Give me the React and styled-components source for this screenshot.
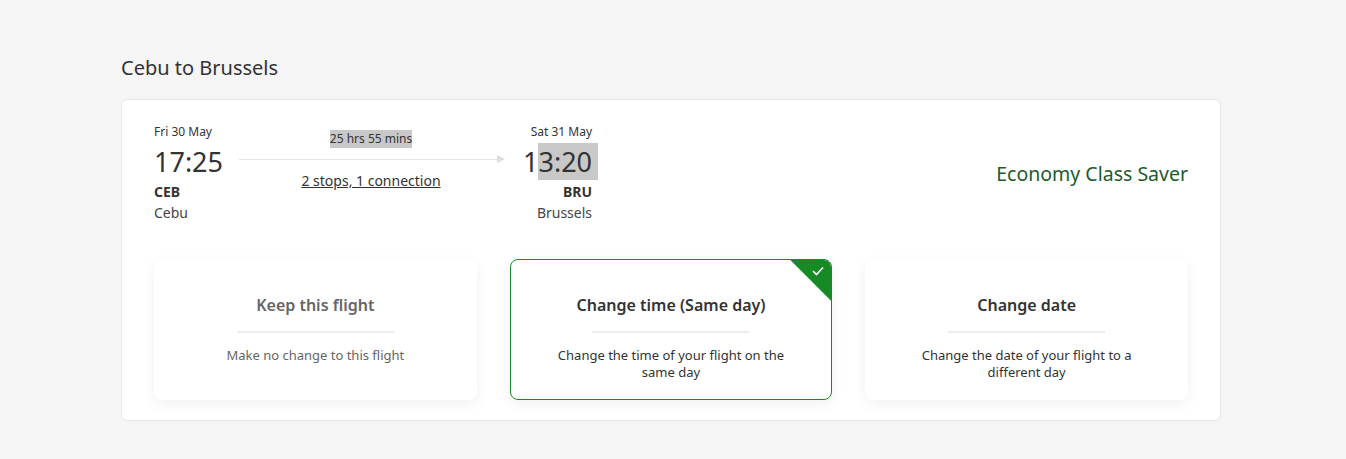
import React from 'react';
import styled, { createGlobalStyle } from 'styled-components';

const GlobalStyle = createGlobalStyle`
    html, body {
        margin: 0;
        padding: 0;
        background: #f5f5f5;
        font-family: "Noto Sans", "Open Sans", sans-serif;
        color: #333;
    }
`;

const options = [
    { id: 'keep', title: 'Keep this flight', text: 'Make no change to this flight', muted: true },
    { id: 'time', title: 'Change time (Same day)', text: 'Change the time of your flight on the same day', selected: true },
    { id: 'date', title: 'Change date', text: 'Change the date of your flight to a different day' },
];

const App = () => {
    return (
        <Page>
            <GlobalStyle />
            <Heading>Cebu to Brussels</Heading>
            <Card>
                <FlightRow>
                    <Endpoint>
                        <DateText>Fri 30 May</DateText>
                        <Time>17:25</Time>
                        <Code>CEB</Code>
                        <City>Cebu</City>
                    </Endpoint>
                    <Route>
                        <Duration>25 hrs 55 mins</Duration>
                        <Line>
                            <svg width="8" height="8" viewBox="0 0 8 8">
                                <path d="M0 0 L8 4 L0 8 Z" fill="#ddd" />
                            </svg>
                        </Line>
                        <Stops>2 stops, 1 connection</Stops>
                    </Route>
                    <Endpoint $right>
                        <DateText>Sat 31 May</DateText>
                        <Time>
                            1<Highlight>3:20</Highlight>
                        </Time>
                        <Code>BRU</Code>
                        <City>Brussels</City>
                    </Endpoint>
                    <Fare>Economy Class Saver</Fare>
                </FlightRow>
                <OptionGrid>
                    {options.map((o) => (
                        <Option key={o.id} $selected={o.selected}>
                            {o.selected && (
                                <Corner>
                                    <svg width="12" height="10" viewBox="0 0 12 10">
                                        <path d="M1 5 L4.5 8.5 L11 1.5" fill="none" stroke="#fff" strokeWidth="1.6" />
                                    </svg>
                                </Corner>
                            )}
                            <OptionTitle $muted={o.muted}>{o.title}</OptionTitle>
                            <Divider />
                            <OptionText $muted={o.muted}>{o.text}</OptionText>
                        </Option>
                    ))}
                </OptionGrid>
            </Card>
        </Page>
    );
};

const Page = styled.div`
    padding: 54px 125px 37px 121px;
`;

const Heading = styled.h2`
    margin: 0 0 17px 0;
    font-size: 20px;
    font-weight: 400;
    line-height: 28px;
    color: #333;
`;

const Card = styled.div`
    background: #fff;
    border: 1px solid #e6e6e6;
    border-radius: 6px;
    padding: 23px 32px 20px 32px;
`;

const FlightRow = styled.div`
    display: flex;
    align-items: flex-start;
`;

const Endpoint = styled.div`
    display: flex;
    flex-direction: column;
    align-items: ${(p) => (p.$right ? 'flex-end' : 'flex-start')};
`;

const DateText = styled.div`
    font-size: 12px;
    line-height: 18px;
    color: #333;
`;

const Time = styled.div`
    font-size: 27px;
    line-height: 34px;
    color: #333;
    margin-top: 4px;
`;

const Highlight = styled.span`
    background: #c8c8c8;
    padding-right: 6px;
    margin-right: -6px;
`;

const Code = styled.div`
    font-size: 14px;
    font-weight: 700;
    line-height: 20px;
    margin-top: 3px;
`;

const City = styled.div`
    font-size: 14px;
    line-height: 21px;
    color: #444;
`;

const Route = styled.div`
    width: 264px;
    margin: 7px 20px 0 16px;
    display: flex;
    flex-direction: column;
    align-items: center;
`;

const Duration = styled.span`
    font-size: 12px;
    line-height: 18px;
    background: #c8c8c8;
    color: #333;
`;

const Line = styled.div`
    align-self: stretch;
    height: 1px;
    background: #e4e4e4;
    margin: 11px 0 11px 0;
    position: relative;
    svg {
        position: absolute;
        right: -2px;
        top: -4px;
    }
`;

const Stops = styled.span`
    font-size: 14px;
    line-height: 20px;
    text-decoration: underline;
    color: #333;
`;

const Fare = styled.div`
    margin-left: auto;
    margin-top: 37px;
    font-size: 19.5px;
    line-height: 28px;
    color: #1d5a2c;
`;

const OptionGrid = styled.div`
    display: grid;
    grid-template-columns: repeat(3, 1fr);
    gap: 33px;
    margin-top: 36px;
`;

const Option = styled.div`
    position: relative;
    overflow: hidden;
    height: 141px;
    box-sizing: border-box;
    background: #fff;
    border-radius: 8px;
    border: 1px solid ${(p) => (p.$selected ? '#1a8a24' : 'transparent')};
    box-shadow: 0 4px 14px rgba(0, 0, 0, 0.06);
    display: flex;
    flex-direction: column;
    align-items: center;
    padding: 33px 40px 0 40px;
    text-align: center;
`;

const Corner = styled.div`
    position: absolute;
    top: 0;
    right: 0;
    width: 41px;
    height: 41px;
    background: #168a24;
    clip-path: polygon(0 0, 100% 0, 100% 100%);
    svg {
        position: absolute;
        top: 6px;
        right: 7px;
    }
`;

const OptionTitle = styled.div`
    font-size: 16px;
    font-weight: 600;
    line-height: 24px;
    color: ${(p) => (p.$muted ? '#666' : '#333')};
`;

const Divider = styled.div`
    width: 157px;
    height: 2px;
    background: #ececec;
    margin: 14px 0 14px 0;
`;

const OptionText = styled.div`
    font-size: 13px;
    line-height: 17px;
    color: ${(p) => (p.$muted ? '#666' : '#333')};
    max-width: 240px;
`;

export default App;
